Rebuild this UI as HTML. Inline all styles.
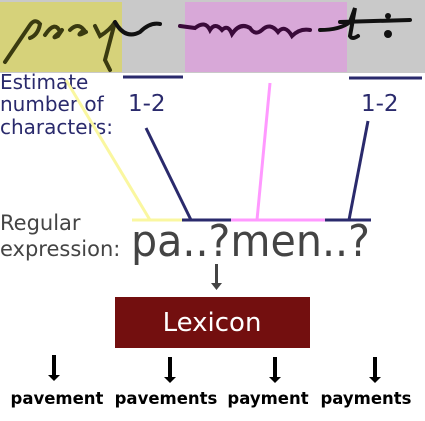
<!DOCTYPE html>
<html><head><meta charset="utf-8"><style>
html,body{margin:0;padding:0;background:#fff;}
svg{display:block}
text{font-family:"DejaVu Sans","Liberation Sans",sans-serif}
</style></head><body>
<svg width="425" height="421" viewBox="0 0 425 421" xmlns="http://www.w3.org/2000/svg">
<rect x="0" y="0" width="425" height="73" fill="#c9c9c9"/>
<rect x="0" y="2" width="122" height="70" fill="#d6d27a"/>
<rect x="185" y="2" width="162" height="70" fill="#d8a8d8"/>
<g fill="none" stroke-linecap="round">
<path d="M5 62 L30 25 Q35 18 40 24 Q38 35 30 38" stroke="#3a3a10" stroke-width="4"/>
<path d="M45 35 Q55 20 60 32 Q50 40 58 36 L62 30" stroke="#3a3a10" stroke-width="4"/>
<path d="M70 30 Q78 22 84 30 Q74 38 86 32" stroke="#3a3a10" stroke-width="4"/>
<path d="M95 26 L100 36 Q110 30 115 22 L105 60 L110 70" stroke="#3a3a10" stroke-width="4"/>
<path d="M115 22 Q125 40 140 32 Q150 22 160 24" stroke="#111" stroke-width="4"/>
<path d="M180 26 L195 28 Q205 20 210 30 Q215 22 222 30 Q228 24 232 34 Q240 22 250 28 Q255 36 262 30 Q270 22 278 32 Q285 24 292 36 Q300 28 310 30" stroke="#3a0a3a" stroke-width="4"/>
<path d="M320 30 Q340 30 350 22 L355 8 L350 36 Q352 40 358 36 M340 22 L410 20" stroke="#111" stroke-width="4"/>
<circle cx="388" cy="16" r="3" fill="#111"/><circle cx="388" cy="34" r="4" fill="#111"/>
</g>
<g fill="#2a2a6c" font-size="20">
<text x="0" y="89">Estimate</text>
<text x="0" y="111">number of</text>
<text x="0" y="134">characters:</text>
</g>
<g stroke-width="3" fill="none">
<line x1="123" y1="77" x2="183" y2="77" stroke="#2a2a6c"/>
<line x1="349" y1="78" x2="422" y2="78" stroke="#2a2a6c"/>
<line x1="66" y1="80" x2="150" y2="220" stroke="#faf7a0"/>
<line x1="146" y1="128" x2="191" y2="220" stroke="#2a2a6c"/>
<line x1="270" y1="83" x2="257" y2="220" stroke="#ff99ff"/>
<line x1="368" y1="121" x2="349" y2="220" stroke="#2a2a6c"/>
<line x1="132" y1="220" x2="182" y2="220" stroke="#faf7a0"/>
<line x1="182" y1="220" x2="231" y2="220" stroke="#2a2a6c"/>
<line x1="231" y1="220" x2="325" y2="220" stroke="#ff99ff"/>
<line x1="325" y1="220" x2="371" y2="220" stroke="#2a2a6c"/>
</g>
<g fill="#2a2a6c" font-size="23">
<text x="128" y="111">1-2</text>
<text x="361" y="111">1-2</text>
</g>
<g fill="#444" font-size="21">
<text x="0" y="230">Regular</text>
<text x="0" y="256">expression:</text>
</g>
<text x="131" y="256" font-size="44" fill="#444" textLength="239" lengthAdjust="spacingAndGlyphs">pa..?men..?</text>
<rect x="215" y="264" width="3" height="20" fill="#444"/>
<path d="M211 283 L222 283 L216.5 290 Z" fill="#444"/>
<rect x="115" y="297" width="195" height="51" fill="#730f0f"/>
<text x="212" y="331" font-size="26" fill="#fff" text-anchor="middle">Lexicon</text>
<g fill="#000">
<rect x="52" y="355" width="4" height="21"/><path d="M48 375 L60 375 L54 381 Z"/>
<rect x="168" y="357" width="4" height="21"/><path d="M164 377 L176 377 L170 383 Z"/>
<rect x="273" y="357" width="4" height="21"/><path d="M269 377 L281 377 L275 383 Z"/>
<rect x="373" y="357" width="4" height="21"/><path d="M369 377 L381 377 L375 383 Z"/>
</g>
<g fill="#000" font-size="16.5" font-weight="bold" text-anchor="middle">
<text x="57" y="404">pavement</text>
<text x="166" y="404">pavements</text>
<text x="268" y="404">payment</text>
<text x="366" y="404">payments</text>
</g>
</svg>
</body></html>
